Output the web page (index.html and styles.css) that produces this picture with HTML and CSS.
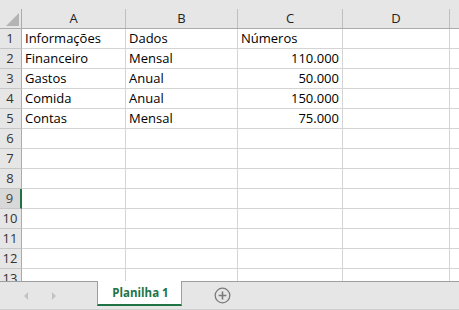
FILE: index.html
```html
<!DOCTYPE html>
<html lang="pt">
<head>
<meta charset="utf-8">
<link rel="stylesheet" href="styles.css">
</head>
<body>
<div class="app">
  <div class="sheet">
    <div class="colheads">
      <div class="corner"><span class="tri"></span></div>
      <div class="ch">A</div>
      <div class="ch cb">B</div>
      <div class="ch cc">C</div>
      <div class="ch cd">D</div>
      <div class="ch ce"></div>
    </div>
    <div class="grid">
      <div class="rh">1</div><div class="c">Informações</div><div class="c">Dados</div><div class="c">Números</div><div class="c"></div><div class="c last"></div>
      <div class="rh">2</div><div class="c">Financeiro</div><div class="c">Mensal</div><div class="c num">110.000</div><div class="c"></div><div class="c last"></div>
      <div class="rh">3</div><div class="c">Gastos</div><div class="c">Anual</div><div class="c num">50.000</div><div class="c"></div><div class="c last"></div>
      <div class="rh">4</div><div class="c">Comida</div><div class="c">Anual</div><div class="c num">150.000</div><div class="c"></div><div class="c last"></div>
      <div class="rh">5</div><div class="c">Contas</div><div class="c">Mensal</div><div class="c num">75.000</div><div class="c"></div><div class="c last"></div>
      <div class="rh">6</div><div class="c"></div><div class="c"></div><div class="c"></div><div class="c"></div><div class="c last"></div>
      <div class="rh">7</div><div class="c"></div><div class="c"></div><div class="c"></div><div class="c"></div><div class="c last"></div>
      <div class="rh">8</div><div class="c"></div><div class="c"></div><div class="c"></div><div class="c"></div><div class="c last"></div>
      <div class="rh sel">9</div><div class="c"></div><div class="c"></div><div class="c"></div><div class="c"></div><div class="c last"></div>
      <div class="rh">10</div><div class="c"></div><div class="c"></div><div class="c"></div><div class="c"></div><div class="c last"></div>
      <div class="rh">11</div><div class="c"></div><div class="c"></div><div class="c"></div><div class="c"></div><div class="c last"></div>
      <div class="rh">12</div><div class="c"></div><div class="c"></div><div class="c"></div><div class="c"></div><div class="c last"></div>
      <div class="rh">13</div><div class="c"></div><div class="c"></div><div class="c"></div><div class="c"></div><div class="c last"></div>
    </div>
  </div>
  <div class="tabbar">
    <div class="nav">
      <span class="arrow left"></span>
      <span class="arrow right"></span>
    </div>
    <div class="tab">Planilha 1</div>
    <div class="add">
      <svg width="17" height="17" viewBox="0 0 17 17" aria-hidden="true">
        <circle cx="8.5" cy="8.5" r="7.3" fill="none" stroke="#7b7b7b" stroke-width="1.3"/>
        <path d="M8.5 4.6v7.8M4.6 8.5h7.8" stroke="#7b7b7b" stroke-width="1.6"/>
      </svg>
    </div>
  </div>
</div>
</body>
</html>
```
FILE: styles.css
```css
* { box-sizing: border-box; }
html, body { margin: 0; padding: 0; background: #ffffff; }
body {
  width: 459px;
  height: 310px;
  overflow: hidden;
  font-family: "Open Sans", "Noto Sans", sans-serif;
  font-size: 13px;
  color: #000;
}
.app { display: flex; flex-direction: column; height: 310px; }
.sheet { height: 281px; overflow: hidden; }

.colheads {
  display: grid;
  grid-template-columns: 22px 104px 112px 105px 107px 9px;
  background: #e6e6e6;
  padding-top: 9px;
  border-bottom: 1px solid #ababab;
}
.corner {
  position: relative;
  height: 19px;
  border-right: 1px solid #ababab;
}
.tri {
  position: absolute;
  right: 2px;
  bottom: 2px;
  width: 0;
  height: 0;
  border-left: 13px solid transparent;
  border-bottom: 13px solid #b4b4b4;
}
.ch {
  height: 19px;
  line-height: 19px;
  text-align: center;
  color: #222;
  border-right: 1px solid #bfbfbf;
}
.ce { border-right: none; }

.grid {
  display: grid;
  grid-template-columns: 22px 104px 112px 105px 107px 9px;
  grid-auto-rows: 20px;
}
.rh {
  background: #e6e6e6;
  border-right: 1px solid #ababab;
  border-bottom: 1px solid #c6c6c6;
  text-align: center;
  line-height: 19px;
  color: #333;
  padding-right: 1px;
}
.rh.sel {
  background: #d8d8d8;
  color: #444;
  border-right: 2px solid #217346;
}
.c {
  border-right: 1px solid #d4d4d4;
  border-bottom: 1px solid #d4d4d4;
  line-height: 19px;
  padding: 0 2px 0 3px;
  white-space: nowrap;
  overflow: hidden;
}
.c.last { border-right: none; }
.num { text-align: right; padding-right: 3px; }

.tabbar {
  height: 29px;
  display: flex;
  align-items: flex-start;
  background: #e6e6e6;
  border-top: 1px solid #9e9e9e;
  border-bottom: 1px solid #cfcfcf;
}
.nav {
  width: 97px;
  height: 27px;
  display: flex;
  align-items: center;
  padding-left: 24px;
  gap: 24px;
}
.arrow {
  width: 0;
  height: 0;
  border-top: 4px solid transparent;
  border-bottom: 4px solid transparent;
}
.arrow.left { border-right: 4px solid #c2c2c2; }
.arrow.right { border-left: 4px solid #c2c2c2; }
.tab {
  margin-top: -1px;
  width: 85px;
  height: 25px;
  background: #ffffff;
  border-left: 1px solid #9e9e9e;
  border-right: 1px solid #9e9e9e;
  border-bottom: 2px solid #217346;
  color: #217346;
  font-weight: 700;
  font-size: 11.5px;
  line-height: 24px;
  text-align: center;
  padding-left: 2px;
}
.add {
  width: 80px;
  height: 27px;
  display: flex;
  align-items: center;
  justify-content: center;
}
```
